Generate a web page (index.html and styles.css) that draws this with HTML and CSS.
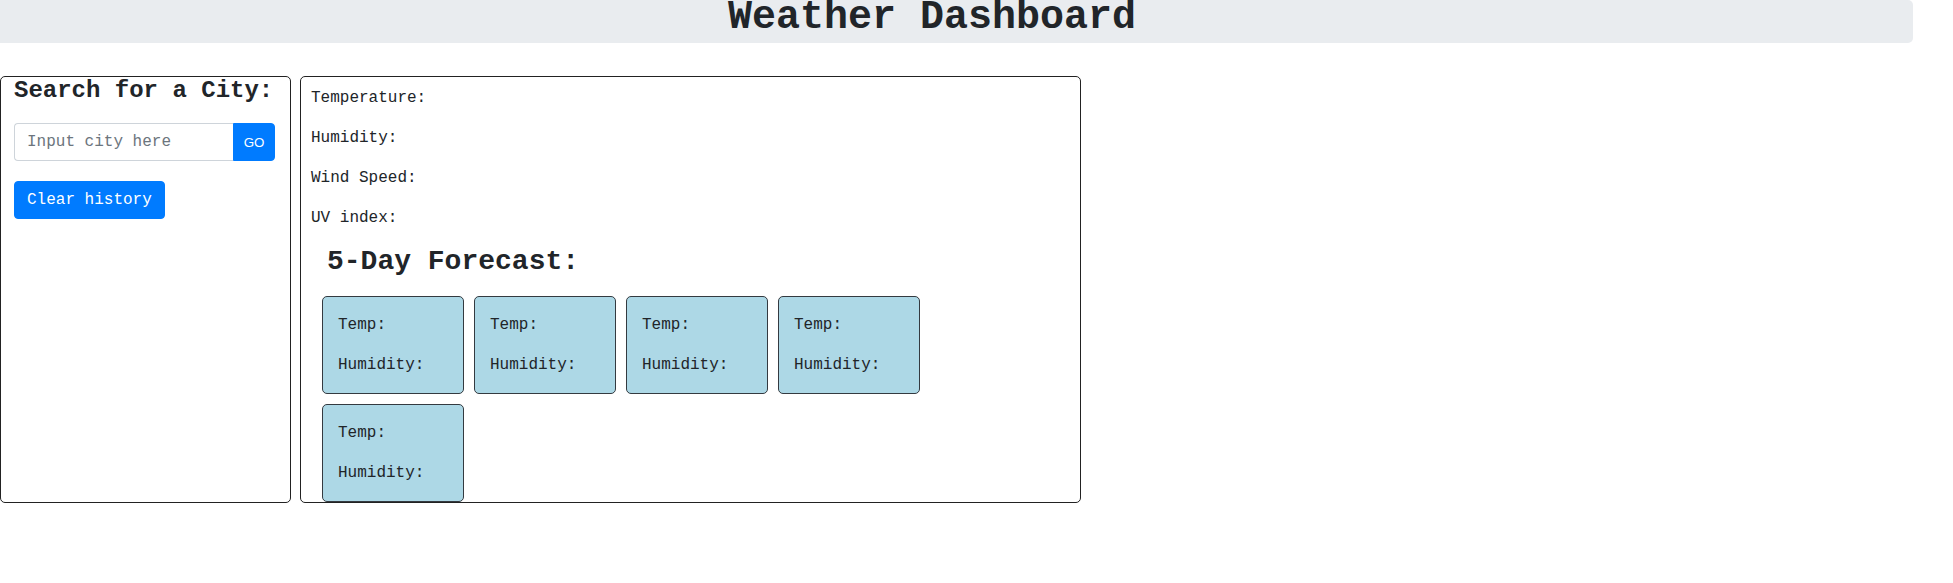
FILE: index.html
```html
<!DOCTYPE html>
<html lang="en">
<head>
<meta charset="utf-8">
<title>Weather Dashboard</title>
<link rel="stylesheet" href="styles.css">
</head>
<body>
<header class="top-bar">
  <h1 class="title">Weather Dashboard</h1>
</header>
<main class="layout">
  <aside class="panel search-panel">
    <h4 class="search-title">Search for a City:</h4>
    <div class="input-group">
      <input class="city-input" type="text" placeholder="Input city here">
      <button class="go-btn" type="button">GO</button>
    </div>
    <button class="clear-btn" type="button">Clear history</button>
  </aside>
  <section class="panel weather-panel">
    <p class="stat">Temperature:</p>
    <p class="stat">Humidity:</p>
    <p class="stat">Wind Speed:</p>
    <p class="stat">UV index:</p>
    <div class="forecast">
      <h3 class="forecast-title">5-Day Forecast:</h3>
      <div class="cards">
        <div class="card"><p class="card-line">Temp:</p><p class="card-line">Humidity:</p></div>
        <div class="card"><p class="card-line">Temp:</p><p class="card-line">Humidity:</p></div>
        <div class="card"><p class="card-line">Temp:</p><p class="card-line">Humidity:</p></div>
        <div class="card"><p class="card-line">Temp:</p><p class="card-line">Humidity:</p></div>
        <div class="card"><p class="card-line">Temp:</p><p class="card-line">Humidity:</p></div>
      </div>
    </div>
  </section>
</main>
</body>
</html>
```
FILE: styles.css
```css
* { box-sizing: border-box; }

body {
  margin: 0;
  font-family: "Liberation Mono", "Courier New", monospace;
  font-size: 16px;
  color: #212529;
  background: #fff;
}

.top-bar {
  background: #e9ecef;
  height: 43px;
  margin: 0 40px 0 -49px;
  border-radius: 5px;
}

.title {
  margin: 0;
  font-size: 40px;
  line-height: 36px;
  font-weight: bold;
  text-align: center;
}

.layout {
  display: flex;
  align-items: flex-start;
  gap: 9px;
  margin-top: 33px;
}

.panel {
  border: 1px solid #222;
  border-radius: 5px;
  height: 427px;
}

.search-panel {
  width: 291px;
  padding: 0 15px 0 13px;
}

.search-title {
  margin: 0 0 18px;
  font-size: 24px;
  line-height: 28px;
  font-weight: bold;
}

.input-group {
  display: flex;
  height: 38px;
}

.city-input {
  flex: 1;
  min-width: 0;
  height: 38px;
  border: 1px solid #ced4da;
  border-right: none;
  border-radius: 4px 0 0 4px;
  padding: 0 12px;
  font-family: "Liberation Mono", "Courier New", monospace;
  font-size: 16px;
  color: #495057;
  outline: none;
}

.city-input::placeholder { color: #6c757d; }

.go-btn {
  width: 42px;
  height: 38px;
  border: 1px solid #007bff;
  background: #007bff;
  color: #fff;
  border-radius: 0 4px 4px 0;
  font-family: "Liberation Sans", Arial, sans-serif;
  font-size: 13.33px;
  padding: 0;
}

.clear-btn {
  display: block;
  margin-top: 20px;
  height: 38px;
  padding: 0 12px;
  border: 1px solid #007bff;
  background: #007bff;
  color: #fff;
  border-radius: 4px;
  font-family: "Liberation Mono", "Courier New", monospace;
  font-size: 16px;
  line-height: 24px;
}

.weather-panel {
  width: 781px;
  padding: 9px 10px 0 10px;
}

.stat {
  margin: 0 0 16px;
  line-height: 24px;
}

.forecast {
  padding-left: 16px;
}

.forecast-title {
  margin: 0 0 13px;
  font-size: 28px;
  line-height: 32px;
  font-weight: bold;
}

.cards {
  display: flex;
  flex-wrap: wrap;
  margin-left: -10px;
  width: 750px;
}

.card {
  width: 142px;
  margin: 5px;
  padding: 16px 15px 0;
  background: #add8e6;
  border: 1px solid #343a40;
  border-radius: 5px;
}

.card-line {
  margin: 0 0 16px;
  line-height: 24px;
}
```
